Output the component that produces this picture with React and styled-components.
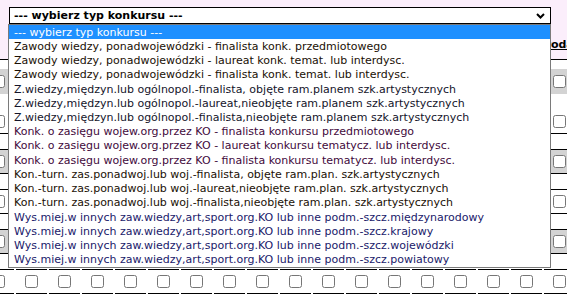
import React from "react";
import styled, { createGlobalStyle } from "styled-components";

const Global = createGlobalStyle`
  html, body { margin: 0; padding: 0; background: #fff; overflow: hidden; }
  body { font-family: "DejaVu Sans", Verdana, sans-serif; }
`;

const Page = styled.div`
  position: relative;
  width: 567px;
  height: 295px;
  overflow: hidden;
  background: #fff;
`;

const Header = styled.div`
  height: 59px;
  background: #fbeefb;
  padding: 7px 0 0 9px;
  box-sizing: border-box;
`;

const SelectBox = styled.div`
  width: 542px;
  height: 17px;
  box-sizing: border-box;
  border: 1px solid #000;
  background: #fff;
  display: flex;
  align-items: center;
  justify-content: space-between;
  padding: 0 5px 0 4px;
  font-size: 11px;
  font-weight: bold;
  color: #000;
  line-height: 15px;
`;

const Title = styled.div`
  margin: 14px 0 0 512px;
  font-size: 11px;
  font-weight: bold;
  text-decoration: underline;
  white-space: nowrap;
  line-height: 13px;
  color: #000;
`;

const Table = styled.div`
  display: flex;
  flex-direction: column;
  overflow: hidden;
`;

const Row = styled.div`
  display: flex;
  gap: 2px;
  margin-left: -17px;
  height: ${(p) => p.$h}px;
`;

const Cell = styled.div`
  flex: 0 0 31px;
  box-sizing: border-box;
  display: flex;
  align-items: center;
  justify-content: center;
  background: ${(p) => (p.$gray ? "#d3d3d3" : "#fff")};
  border-top: ${(p) => (p.$top ? "1px solid #000" : "none")};
  border-bottom: ${(p) => (p.$bottom ? "1px solid #000" : "none")};
`;

const Check = styled.input.attrs({ type: "checkbox" })`
  margin: 0;
  width: 13px;
  height: 13px;
`;

const List = styled.div`
  position: absolute;
  top: 24px;
  left: 8px;
  width: 543px;
  height: 244px;
  box-sizing: border-box;
  border: 1px solid #7a7a7a;
  background: #fff;
  display: flex;
  flex-direction: column;
  z-index: 2;
`;

const Option = styled.div`
  flex: 1;
  display: flex;
  align-items: center;
  padding-left: 5px;
  font-size: 11px;
  white-space: nowrap;
  background: ${(p) => (p.$active ? "#1e90ff" : "transparent")};
  color: ${(p) => (p.$active ? "#fff" : p.$color || "#111")};
`;

const COLS = 18;

const options = [
  ["--- wybierz typ konkursu ---", null],
  ["Zawody wiedzy, ponadwojewódzki - finalista konk. przedmiotowego", "#1a1005"],
  ["Zawody wiedzy, ponadwojewódzki - laureat konk. temat. lub interdysc.", "#1a1005"],
  ["Zawody wiedzy, ponadwojewódzki - finalista konk. temat. lub interdysc.", "#1a1005"],
  ["Z.wiedzy,międzyn.lub ogólnopol.-finalista, objęte ram.planem szk.artystycznych", "#14142a"],
  ["Z.wiedzy,międzyn.lub ogólnopol.-laureat,nieobjęte ram.planem szk.artystycznych", "#14142a"],
  ["Z.wiedzy,międzyn.lub ogólnopol.-finalista,nieobjęte ram.planem szk.artystycznych", "#14142a"],
  ["Konk. o zasięgu wojew.org.przez KO - finalista konkursu przedmiotowego", "#420a3c"],
  ["Konk. o zasięgu wojew.org.przez KO - laureat konkursu tematycz. lub interdysc.", "#420a3c"],
  ["Konk. o zasięgu wojew.org.przez KO - finalista konkursu tematycz. lub interdysc.", "#420a3c"],
  ["Kon.-turn. zas.ponadwoj.lub woj.-finalista, objęte ram.plan. szk.artystycznych", "#1a1005"],
  ["Kon.-turn. zas.ponadwoj.lub woj.-laureat,nieobjęte ram.plan. szk.artystycznych", "#1a1005"],
  ["Kon.-turn. zas.ponadwoj.lub woj.-finalista,nieobjęte ram.plan. szk.artystycznych", "#1a1005"],
  ["Wys.miej.w innych zaw.wiedzy,art,sport.org.KO lub inne podm.-szcz.międzynarodowy", "#20206a"],
  ["Wys.miej.w innych zaw.wiedzy,art,sport.org.KO lub inne podm.-szcz.krajowy", "#20206a"],
  ["Wys.miej.w innych zaw.wiedzy,art,sport.org.KO lub inne podm.-szcz.wojewódzki", "#20206a"],
  ["Wys.miej.w innych zaw.wiedzy,art,sport.org.KO lub inne podm.-szcz.powiatowy", "#20206a"],
];

const rows = [
  { h: 10, top: true },
  { h: 25, gray: true, check: true },
  { h: 15 },
  { h: 25, check: true, bottom: true },
  { h: 15 },
  { h: 25, gray: true, check: true, top: true, bottom: true },
  { h: 15 },
  { h: 25, check: true, top: true, bottom: true },
  { h: 15 },
  { h: 25, gray: true, check: true, top: true, bottom: true },
  { h: 15 },
  { h: 25, check: true, top: true, bottom: true },
];

function Chevron() {
  return (
    <svg width="9" height="6" viewBox="0 0 9 6">
      <path d="M1 1 L4.5 4.5 L8 1" fill="none" stroke="#000" strokeWidth="2" />
    </svg>
  );
}

export default function App() {
  return (
    <Page>
      <Global />
      <Header>
        <SelectBox>
          <span>--- wybierz typ konkursu ---</span>
          <Chevron />
        </SelectBox>
        <Title>Nagroda</Title>
      </Header>
      <Table>
        {rows.map((r, i) => (
          <Row key={i} $h={r.h}>
            {Array.from({ length: COLS }).map((_, c) => (
              <Cell key={c} $gray={r.gray} $top={r.top} $bottom={r.bottom}>
                {r.check && <Check readOnly />}
              </Cell>
            ))}
          </Row>
        ))}
      </Table>
      <List>
        {options.map(([t, col], i) => (
          <Option key={i} $active={i === 0} $color={col}>
            {t}
          </Option>
        ))}
      </List>
    </Page>
  );
}
